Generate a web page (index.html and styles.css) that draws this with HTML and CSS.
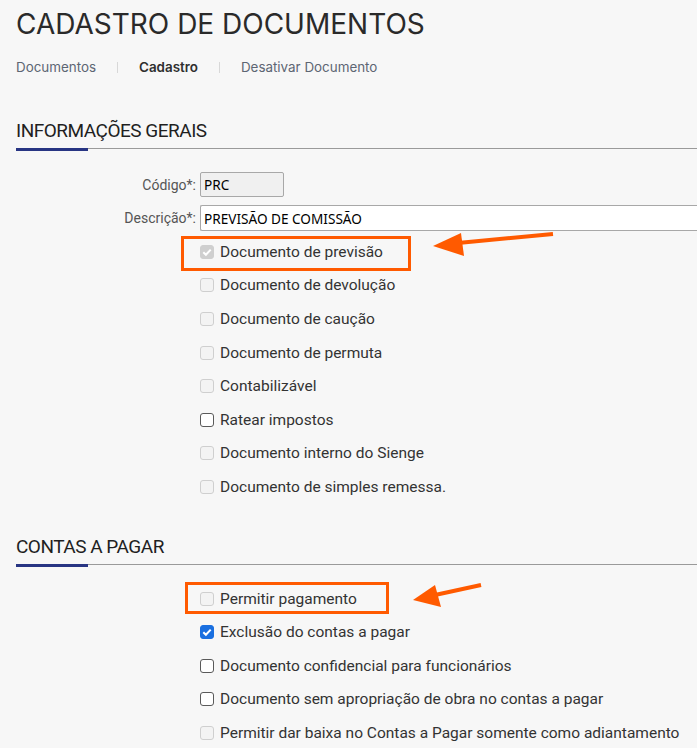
FILE: index.html
```html
<!DOCTYPE html>
<html lang="pt">
<head>
<meta charset="utf-8">
<link rel="stylesheet" href="styles.css">
</head>
<body>
<div class="page">
  <h1 class="title">CADASTRO DE DOCUMENTOS</h1>
  <nav class="crumbs">
    <span class="crumb">Documentos</span>
    <span class="sep"></span>
    <span class="crumb active">Cadastro</span>
    <span class="sep"></span>
    <span class="crumb">Desativar Documento</span>
  </nav>

  <section class="section first">
    <h2 class="sec-title">INFORMAÇÕES GERAIS</h2>
    <div class="sec-line"><span class="bar"></span></div>
    <div class="form">
      <label class="lbl">Código*:</label>
      <div class="field"><input class="inp short" value="PRC" readonly></div>
      <label class="lbl">Descrição*:</label>
      <div class="field"><input class="inp long" value="PREVISÃO DE COMISSÃO"></div>
      <div class="checks">
        <div class="row mark mark1"><span class="cb dis checked"><svg viewBox="0 0 14 14"><path d="M3.3 7.2l2.6 2.6 4.8-5.2" fill="none" stroke="#fff" stroke-width="2"/></svg></span><span class="txt">Documento de previsão</span></div>
        <div class="row"><span class="cb dis"></span><span class="txt">Documento de devolução</span></div>
        <div class="row"><span class="cb dis"></span><span class="txt">Documento de caução</span></div>
        <div class="row"><span class="cb dis"></span><span class="txt">Documento de permuta</span></div>
        <div class="row"><span class="cb dis"></span><span class="txt">Contabilizável</span></div>
        <div class="row"><span class="cb"></span><span class="txt">Ratear impostos</span></div>
        <div class="row"><span class="cb dis"></span><span class="txt">Documento interno do Sienge</span></div>
        <div class="row"><span class="cb dis"></span><span class="txt">Documento de simples remessa.</span></div>
      </div>
    </div>
  </section>

  <section class="section second">
    <h2 class="sec-title">CONTAS A PAGAR</h2>
    <div class="sec-line"><span class="bar"></span></div>
    <div class="form">
      <div class="checks">
        <div class="row mark mark2"><span class="cb dis"></span><span class="txt">Permitir pagamento</span></div>
        <div class="row"><span class="cb on"><svg viewBox="0 0 14 14"><path d="M3.3 7.2l2.6 2.6 4.8-5.2" fill="none" stroke="#fff" stroke-width="2"/></svg></span><span class="txt">Exclusão do contas a pagar</span></div>
        <div class="row"><span class="cb"></span><span class="txt">Documento confidencial para funcionários</span></div>
        <div class="row"><span class="cb"></span><span class="txt">Documento sem apropriação de obra no contas a pagar</span></div>
        <div class="row"><span class="cb dis"></span><span class="txt">Permitir dar baixa no Contas a Pagar somente como adiantamento</span></div>
      </div>
    </div>
  </section>

  <svg class="arrow arrow1" width="130" height="30" viewBox="0 0 130 30"><path d="M125 5 L30 14" stroke="#ff5a00" stroke-width="4" fill="none"/><path d="M5 17 L33 4 L36 27 Z" fill="#ff5a00"/></svg>
  <svg class="arrow arrow2" width="75" height="30" viewBox="0 0 75 30"><path d="M71 4 L25 14" stroke="#ff5a00" stroke-width="4" fill="none"/><path d="M3 19 L25 4 L31 26 Z" fill="#ff5a00"/></svg>
</div>
</body>
</html>
```
FILE: styles.css
```css
html, body {
  margin: 0;
  padding: 0;
  background: #f7f7f7;
}
.page {
  position: relative;
  width: 697px;
  height: 748px;
  overflow: hidden;
  padding: 0 0 0 16px;
  box-sizing: border-box;
  font-family: Roboto, "Liberation Sans", sans-serif;
  color: #333;
}
.title {
  margin: 0;
  padding-top: 8px;
  font-family: Inter, Roboto, sans-serif;
  font-weight: 400;
  font-size: 28px;
  line-height: 32px;
  color: #2a2a2a;
  letter-spacing: 0;
}
.crumbs {
  display: flex;
  align-items: center;
  margin-top: 18px;
  height: 18px;
  font-family: Inter, Roboto, sans-serif;
  font-size: 13.4px;
}
.crumb {
  color: #5d6673;
}
.crumb.active {
  color: #2f2f2f;
  font-weight: 600;
}
.sep {
  width: 1px;
  height: 11px;
  background: #d8d8d8;
  margin: 0 21px;
}
.section.first {
  margin-top: 43px;
}
.section.second {
  margin-top: 31px;
}
.sec-title {
  margin: 0;
  font-family: "Liberation Sans Narrow", Roboto, sans-serif;
  font-weight: 400;
  font-size: 19px;
  line-height: 24px;
  color: #1f1f1f;
  letter-spacing: -0.5px;
}
.sec-line {
  position: relative;
  margin-top: 5px;
  height: 1px;
  background: #9a9a9a;
}
.bar {
  position: absolute;
  left: 0;
  top: 0;
  width: 72px;
  height: 3px;
  background: #283583;
}
.form {
  display: grid;
  grid-template-columns: 180px 1fr;
  column-gap: 4px;
  align-items: center;
}
.first .form {
  margin-top: 23px;
  row-gap: 8px;
}
.second .form {
  margin-top: 17px;
}
.lbl {
  text-align: right;
  font-size: 14px;
  color: #555;
}
.field {
  display: flex;
}
.inp {
  box-sizing: border-box;
  height: 25px;
  border: 1px solid #a8a8a8;
  border-radius: 2px;
  padding: 0 3px;
  font-family: "Noto Sans", "Open Sans", sans-serif;
  font-size: 13.6px;
  color: #000;
  outline: none;
}
.inp.short {
  width: 84px;
  background: #f0f0f0;
}
.inp.long {
  width: 520px;
  height: 26px;
  background: #fff;
  border-right: none;
}
.checks {
  grid-column: 2;
  display: flex;
  flex-direction: column;
}
.first .checks {
  margin-top: -4px;
}
.row {
  position: relative;
  display: flex;
  align-items: center;
  height: 33.6px;
  font-size: 15.5px;
  color: #333;
}
.cb {
  box-sizing: border-box;
  width: 14px;
  height: 14px;
  border: 1.5px solid #5a5a5a;
  border-radius: 3px;
  background: #fff;
  margin-right: 6px;
  display: flex;
}
.cb svg {
  width: 100%;
  height: 100%;
}
.cb.dis {
  border: 1px solid #cfcfcf;
  background: #f3f3f3;
}
.cb.dis.checked {
  background: #cfcfcf;
  border-color: #cfcfcf;
}
.cb.on {
  background: #1a6fe0;
  border-color: #1a6fe0;
}
.cb.on svg, .cb.checked svg {
  margin: -1px;
  width: 14px;
  height: 14px;
}
.mark::before {
  content: "";
  position: absolute;
  box-sizing: border-box;
  border: 3px solid #ff5a00;
}
.mark1::before {
  left: -19px;
  top: 1px;
  width: 230px;
  height: 35px;
}
.mark2::before {
  left: -15px;
  top: 0px;
  width: 204px;
  height: 32px;
}
.arrow {
  position: absolute;
}
.arrow1 {
  left: 428px;
  top: 229px;
}
.arrow2 {
  left: 410px;
  top: 581px;
}
```
